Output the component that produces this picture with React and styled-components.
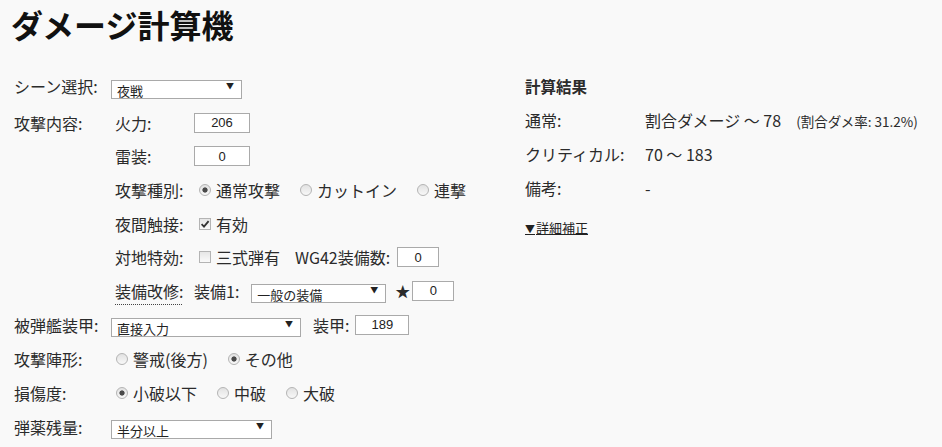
import React from 'react';
import styled, { createGlobalStyle } from 'styled-components';

const GlobalStyle = createGlobalStyle`
  body {
    margin: 0;
    background: #f9f9f9;
    color: #2b2b2b;
    font-family: "Noto Sans CJK JP", "Noto Sans", sans-serif;
    font-size: 16px;
  }
`;

const Select = ({ width, value }) => (
  <SelectWrap width={width}>
    <SelectBox defaultValue={value}>
      <option>{value}</option>
    </SelectBox>
    <Arrow>▼</Arrow>
  </SelectWrap>
);

const Check = ({ checked, children }) => (
  <Option>
    <Box>
      {checked && (
        <svg width="10" height="10" viewBox="0 0 10 10">
          <path d="M1.6 5.2 L4 7.6 L8.6 2.2" fill="none" stroke="#333" strokeWidth="1.8" />
        </svg>
      )}
    </Box>
    {children}
  </Option>
);

const Radio = ({ checked, children }) => (
  <Option>
    <RadioInput type="radio" defaultChecked={checked} />
    {children}
  </Option>
);

const App = () => (
  <Page>
    <GlobalStyle />
    <Title>ダメージ計算機</Title>
    <Main>
      <Form>
        <Row>
          <Label>シーン選択:</Label>
          <Select width="131px" value="夜戦" />
        </Row>
        <Group>
          <Label as="div">攻撃内容:</Label>
          <SubTable>
            <Row sub>
              <SubLabel>火力:</SubLabel>
              <NumInput width="56px" defaultValue="206" />
            </Row>
            <Row sub>
              <SubLabel>雷装:</SubLabel>
              <NumInput width="56px" defaultValue="0" />
            </Row>
            <Row sub>
              <SubLabel>攻撃種別:</SubLabel>
              <Radio checked>通常攻撃</Radio>
              <Radio>カットイン</Radio>
              <Radio>連撃</Radio>
            </Row>
            <Row sub>
              <SubLabel>夜間触接:</SubLabel>
              <Check checked>有効</Check>
            </Row>
            <Row sub>
              <SubLabel>対地特効:</SubLabel>
              <Check>三式弾有</Check>
              <Inline gap="7px">WG42装備数:</Inline>
              <NumInput width="42px" defaultValue="0" />
            </Row>
            <Row sub>
              <SubLabel><Dotted>装備改修:</Dotted></SubLabel>
              <Inline gap="12px">装備1:</Inline>
              <Select width="135px" value="一般の装備" />
              <Star>★</Star>
              <NumInput width="42px" defaultValue="0" />
            </Row>
          </SubTable>
        </Group>
        <Row>
          <Label>被弾艦装甲:</Label>
          <Select width="190px" value="直接入力" />
          <Inline gap="6px" pad="12px">装甲:</Inline>
          <NumInput width="54px" defaultValue="189" />
        </Row>
        <Row>
          <Label>攻撃陣形:</Label>
          <Radio>警戒(後方)</Radio>
          <Radio checked>その他</Radio>
        </Row>
        <Row>
          <Label>損傷度:</Label>
          <Radio checked>小破以下</Radio>
          <Radio>中破</Radio>
          <Radio>大破</Radio>
        </Row>
        <Row>
          <Label>弾薬残量:</Label>
          <Select width="161px" value="半分以上" />
        </Row>
      </Form>
      <Results>
        <ResultTitle>計算結果</ResultTitle>
        <ResultRow>
          <span>通常:</span>
          <span>割合ダメージ ～ 78<Small>(割合ダメ率: 31.2%)</Small></span>
        </ResultRow>
        <ResultRow>
          <span>クリティカル:</span>
          <span>70 ～ 183</span>
        </ResultRow>
        <ResultRow>
          <span>備考:</span>
          <span>-</span>
        </ResultRow>
        <DetailLink href="#"><Tri>▼</Tri>詳細補正</DetailLink>
      </Results>
    </Main>
  </Page>
);

const Page = styled.div`
  padding: 4px 0 0 14px;
`;

const Title = styled.h1`
  margin: 0 0 25px -3px;
  font-size: 32px;
  line-height: 40px;
  font-weight: bold;
  color: #111;
`;

const Main = styled.div`
  display: grid;
  grid-template-columns: 511px 1fr;
`;

const Form = styled.div`
  display: flex;
  flex-direction: column;
`;

const Row = styled.div`
  display: flex;
  align-items: center;
  height: ${props => (props.sub ? '33.6px' : '34px')};
  white-space: nowrap;
`;

const Label = styled.span`
  width: 97px;
  flex-shrink: 0;
  line-height: 34px;
`;

const Group = styled.div`
  display: flex;
  align-items: flex-start;
  margin-top: 3px;
`;

const SubTable = styled.div`
  display: flex;
  flex-direction: column;
  padding-left: 4px;
`;

const SubLabel = styled.span`
  width: 79px;
  flex-shrink: 0;
`;

const Dotted = styled.span`
  text-decoration: underline dotted #444;
  text-decoration-thickness: 1px;
  text-underline-offset: 6px;
`;

const Inline = styled.span`
  margin-right: ${props => props.gap || '4px'};
  margin-left: ${props => props.pad || '0'};
`;

const Star = styled.span`
  font-size: 15px;
  margin: 0 2px 0 9px;
`;

const SelectWrap = styled.span`
  position: relative;
  display: inline-block;
  width: ${props => props.width};
  height: 19px;
`;

const SelectBox = styled.select`
  appearance: none;
  width: 100%;
  height: 100%;
  margin: 0;
  padding: 0 0 0 5px;
  border: 1px solid #a9a9a9;
  border-radius: 0;
  background: #fff;
  color: #222;
  font-family: "Noto Sans CJK JP", sans-serif;
  font-size: 13px;
`;

const Arrow = styled.span`
  position: absolute;
  right: 8px;
  top: 4px;
  font-size: 8px;
  line-height: 10px;
  color: #222;
  pointer-events: none;
`;

const NumInput = styled.input`
  box-sizing: border-box;
  width: ${props => props.width};
  height: 20px;
  margin: 0;
  padding: 0;
  border: 1px solid #aaa;
  background: #fff;
  color: #222;
  text-align: center;
  font-family: "Liberation Sans", sans-serif;
  font-size: 13px;
`;

const Option = styled.label`
  display: inline-flex;
  align-items: center;
  margin-right: 15px;
`;

const RadioInput = styled.input`
  appearance: none;
  box-sizing: border-box;
  width: 12px;
  height: 12px;
  margin: 0 5px;
  border: 1px solid #b4b4b4;
  border-radius: 50%;
  background: linear-gradient(#e2e2e2, #f8f8f8);
  &:checked {
    background: radial-gradient(circle, #4a4a4a 0 2.2px, transparent 3px),
      linear-gradient(#e2e2e2, #f8f8f8);
  }
`;

const Box = styled.span`
  box-sizing: border-box;
  display: inline-flex;
  align-items: center;
  justify-content: center;
  width: 12px;
  height: 12px;
  margin: 0 5px;
  border: 1px solid #b4b4b4;
  background: linear-gradient(#e6e6e6, #fafafa);
`;

const Results = styled.div`
  display: flex;
  flex-direction: column;
  align-items: flex-start;
`;

const ResultTitle = styled.div`
  height: 34px;
  line-height: 34px;
  font-weight: bold;
  font-size: 15.5px;
`;

const ResultRow = styled.div`
  display: grid;
  grid-template-columns: 120px auto;
  height: 34px;
  line-height: 34px;
  white-space: nowrap;
`;

const Small = styled.span`
  font-size: 13.5px;
  margin-left: 15px;
`;

const DetailLink = styled.a`
  margin-top: 6px;
  line-height: 34px;
  font-size: 13px;
  color: #222;
  text-decoration: underline;
`;

const Tri = styled.span`
  font-size: 10px;
  margin-right: 1px;
`;

export default App;
